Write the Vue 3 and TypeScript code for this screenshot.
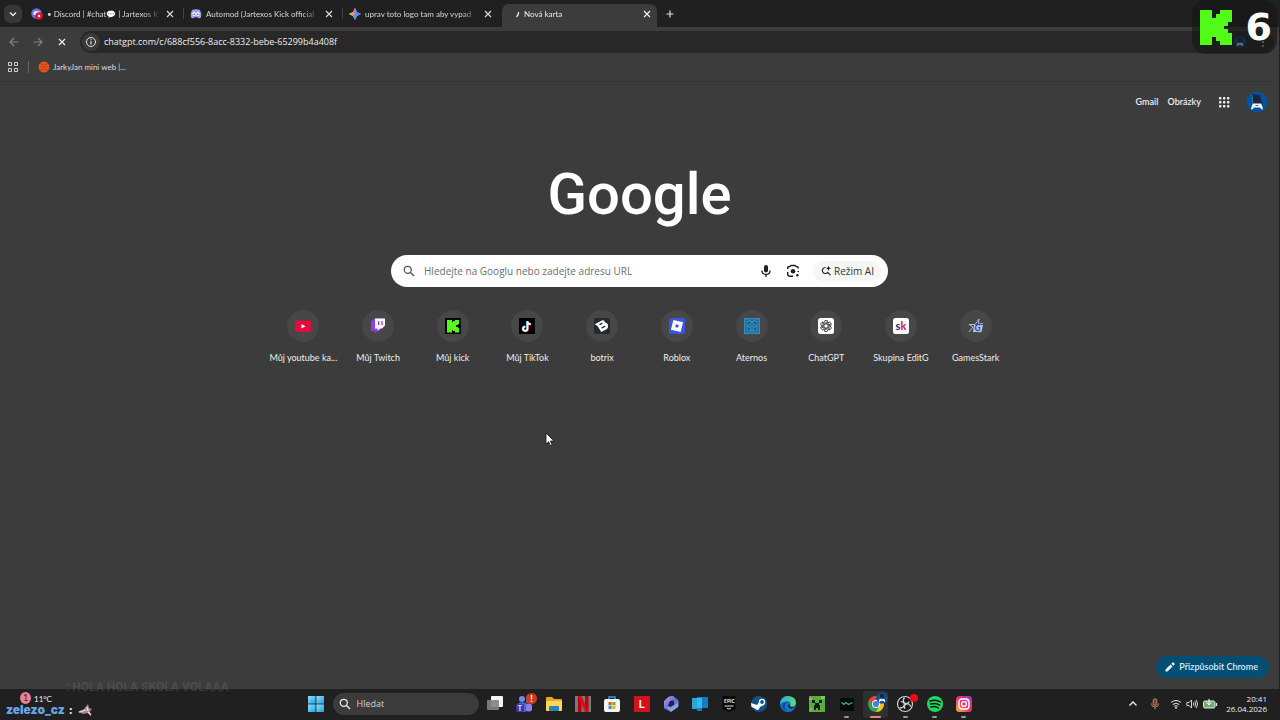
<script setup lang="ts">
import { ref } from 'vue'

interface Tab { icon: string; title: string; active?: boolean }
interface Shortcut { icon: string; label: string; mark?: string[] }
interface TaskApp { icon: string; label: string; mark?: string; state?: 'running' | 'focused' }

const tabs: Tab[] = [
  { icon: 'discord-live', title: '• Discord | #chat💬 | Jartexos K' },
  { icon: 'discord', title: 'Automod (Jartexos Kick official' },
  { icon: 'gemini', title: 'uprav toto logo tam aby vypad' },
  { icon: 'spinner', title: 'Nová karta', active: true },
]

const shortcuts: Shortcut[] = [
  { icon: 'youtube', label: 'Můj youtube ka...' },
  { icon: 'twitch', label: 'Můj Twitch' },
  { icon: 'kick-tile', label: 'Můj kick' },
  { icon: 'tiktok', label: 'Můj TikTok' },
  { icon: 'botrix', label: 'botrix' },
  { icon: 'roblox', label: 'Roblox' },
  { icon: 'aternos', label: 'Aternos' },
  { icon: 'chatgpt', label: 'ChatGPT' },
  { icon: 'skupina', label: 'Skupina EditG', mark: ['s', 'k'] },
  { icon: 'gamesstark', label: 'GamesStark', mark: ['G'] },
]

const apps: TaskApp[] = [
  { icon: 'taskview', label: 'Task View' },
  { icon: 'teams', label: 'Teams', mark: 'T' },
  { icon: 'folder', label: 'Explorer' },
  { icon: 'netflix', label: 'Netflix' },
  { icon: 'store', label: 'Store' },
  { icon: 'lapp', label: 'L', mark: 'L' },
  { icon: 'copilot', label: 'Microsoft 365' },
  { icon: 'panel', label: 'Panel' },
  { icon: 'epic', label: 'Epic Games', mark: 'EPIC' },
  { icon: 'steam', label: 'Steam' },
  { icon: 'edge', label: 'Edge' },
  { icon: 'minecraft', label: 'Minecraft' },
  { icon: 'wave', label: 'Wave', state: 'running' },
  { icon: 'chrome', label: 'Chrome', state: 'focused' },
  { icon: 'obs', label: 'OBS', state: 'running' },
  { icon: 'spotify', label: 'Spotify', state: 'running' },
  { icon: 'instagram', label: 'Instagram', state: 'running' },
]

const url = ref('chatgpt.com/c/688cf556-8acc-8332-bebe-65299b4a408f')
const query = ref('')
const taskQuery = ref('')
</script>

<template>
  <div class="screen">
    <svg class="defs" aria-hidden="true">
      <defs>
        <linearGradient id="gem" x1="0" y1="0.3" x2="1" y2="0.5">
          <stop offset="0.1" stop-color="#f2c24b" /><stop offset="0.45" stop-color="#d77ba8" /><stop offset="0.65" stop-color="#4f94f5" />
        </linearGradient>
        <linearGradient id="win" x1="0" y1="0" x2="1" y2="1">
          <stop offset="0" stop-color="#8fe3fb" /><stop offset="1" stop-color="#1a9fe8" />
        </linearGradient>
        <linearGradient id="insta" x1="0" y1="1" x2="1" y2="0">
          <stop offset="0" stop-color="#fdc03a" /><stop offset="0.45" stop-color="#ee3564" /><stop offset="1" stop-color="#9b30c8" />
        </linearGradient>
        <linearGradient id="edgeg" x1="0" y1="0" x2="1" y2="0.4">
          <stop offset="0" stop-color="#2aa9e4" /><stop offset="1" stop-color="#5cd878" />
        </linearGradient>
        <linearGradient id="cop" x1="0" y1="0" x2="1" y2="1">
          <stop offset="0" stop-color="#c79af5" /><stop offset="0.5" stop-color="#5d6edb" /><stop offset="1" stop-color="#67b9ef" />
        </linearGradient>
      </defs>
      <symbol id="i-close" viewBox="0 0 10 10"><path d="M2 2l6 6M8 2l-6 6" stroke="currentColor" stroke-width="1.2" /></symbol>
      <symbol id="i-discord" viewBox="0 0 12 12">
        <path d="M2 2Q6 .6 10 2Q12 5.500 11 9.500Q9.500 10.800 8 10L7.500 9.200H4.500L4 10Q2.500 10.800 1 9.500Q0 5.500 2 2z" fill="#9aa0f0" />
        <ellipse cx="4.100" cy="6" rx="1.700" ry="1.900" fill="#fff" /><ellipse cx="7.900" cy="6" rx="1.700" ry="1.900" fill="#fff" />
        <circle cx="4.200" cy="6.200" r=".8" fill="#3a4090" /><circle cx="7.800" cy="6.200" r=".8" fill="#3a4090" />
      </symbol>
      <symbol id="i-discord-live" viewBox="0 0 12 12">
        <circle cx="5.500" cy="5.500" r="5.300" fill="#6570e8" /><path d="M2.500 4Q5.500 2 9 4v3H2.500z" fill="#e8eaff" />
        <circle cx="8" cy="8" r="3.700" fill="#e01432" /><circle cx="8" cy="8" r="1.200" fill="#fff" />
      </symbol>
      <symbol id="i-gemini" viewBox="0 0 12 12">
        <path d="M6 .5Q6.800 5.200 11.500 6Q6.800 6.800 6 11.500Q5.200 6.800 .5 6Q5.200 5.200 6 .5z" fill="url(#gem)" stroke="url(#gem)" stroke-width="1" />
        <path d="M4 7.500L6 6.500 6 11z" fill="#46b781" opacity=".8" />
      </symbol>
      <symbol id="i-spinner" viewBox="0 0 12 12"><path d="M10.600 4Q10.800 7 8.500 9" fill="none" stroke="#e7ecf3" stroke-width="1.300" /></symbol>
      <symbol id="i-kick" viewBox="0 0 8 9" preserveAspectRatio="none">
        <g fill="#53fc18" shape-rendering="crispEdges">
          <rect width="3" height="9" /><rect x="3" y="2" width="3" height="5" /><rect x="4" y="1" width="3" height="3" />
          <rect x="5" width="3" height="3" /><rect x="4" y="5" width="3" height="3" /><rect x="5" y="6" width="3" height="3" />
        </g>
      </symbol>
      <symbol id="i-avatar" viewBox="0 0 22 22">
        <circle cx="11" cy="11" r="10.500" fill="#07519f" /><path d="M6 3l8 1 2 9-10 4z" fill="#1a2639" /><path d="M6 4l1 13" stroke="#2e78ba" />
        <path d="M7 12.500h8q1.700 2.500 2 6-1.800.500-3-2H8Q6.800 19 5 18.500 5.300 15 7 12.500z" fill="#fff" />
        <path d="M9.500 14.500h3" stroke="#567" />
      </symbol>

      <symbol id="i-youtube" viewBox="0 0 16 16"><rect y="2.500" width="16" height="11.500" rx="2.500" fill="#e8093e" /><path d="M6.500 6v4.500l4-2.250z" fill="#fff" /></symbol>
      <symbol id="i-twitch" viewBox="0 0 16 16">
        <path d="M1 3.500L4.500 .5H14V8L9 13H7.500L5 15.500V13H1z" fill="#8c3df0" /><path d="M5 .5h10V7.500L12 10.500H10L7.500 12.800V10.500H5z" fill="#fff" />
        <path d="M8.700 3.300v3.700M12 3.300v3.700" stroke="#7c34df" stroke-width="1.300" />
      </symbol>
      <symbol id="i-kick-tile" viewBox="0 0 16 16"><rect width="16" height="16" fill="#070b06" /><use href="#i-kick" x="2" y="1.500" width="12" height="13" /></symbol>
      <symbol id="i-tiktok" viewBox="0 0 16 16">
        <rect width="16" height="16" fill="#000" />
        <g fill="none" stroke-width="1.700"><path d="M8 3v7.500a2.200 2.200 0 1 1-2.200-2.200M8 3.500q.8 2.300 3.300 2.500" stroke="#25e2df" /><path d="M9 3.600v7.500a2.200 2.200 0 1 1-2.200-2.200M9 4.100q.8 2.300 3.300 2.500" stroke="#ef3157" /><path d="M8.500 3.200v7.500a2.200 2.200 0 1 1-2.200-2.200M8.500 3.700q.8 2.300 3.300 2.500" stroke="#fff" /></g>
      </symbol>
      <symbol id="i-botrix" viewBox="0 0 16 16">
        <rect width="16" height="16" rx="2" fill="#24292f" />
        <g transform="rotate(-28 8 8)"><path d="M2.500 3h8q2.500.500 2 3.300 1.800 1 1.300 3.500T11 13H4.500L4 6z" fill="#fff" /><rect x="6.300" y="5" width="3.600" height="1.300" rx=".6" fill="#24292f" /><rect x="6.500" y="9" width="4.300" height="1.300" rx=".6" fill="#24292f" /></g>
      </symbol>
      <symbol id="i-roblox" viewBox="0 0 16 16"><rect width="16" height="16" rx="2.500" fill="#3b55e0" /><g transform="rotate(14 8 8)"><rect x="3" y="3" width="10" height="10" fill="#fff" /><rect x="6.500" y="6.500" width="3" height="3" fill="#3b55e0" /></g></symbol>
      <symbol id="i-aternos" viewBox="0 0 16 16">
        <rect width="16" height="16" fill="#2c8bc9" /><rect x="2" y="2" width="12" height="12" fill="none" stroke="#27506d" stroke-width=".8" />
        <path d="M4.500 6.500v-2h2M9.500 4.500h2v2M11.500 9.500v2h-2M6.500 11.500h-2v-2" fill="none" stroke="#23475f" stroke-width="1.200" />
        <rect x="6" y="6" width="4" height="4" fill="none" stroke="#23475f" stroke-width="1" stroke-dasharray="2 2" stroke-dashoffset="-1" />
      </symbol>
      <symbol id="i-chatgpt" viewBox="0 0 16 16">
        <rect width="16" height="16" rx="2.500" fill="#fff" />
        <g fill="none" stroke="#222" stroke-width=".8">
          <path id="petal" d="M6 8.900V4.500Q6 2.400 8 2.400Q9.300 2.400 10 3.400L6.500 5.400" /><use href="#petal" transform="rotate(60 8 8)" /><use href="#petal" transform="rotate(120 8 8)" />
          <use href="#petal" transform="rotate(180 8 8)" /><use href="#petal" transform="rotate(240 8 8)" /><use href="#petal" transform="rotate(300 8 8)" />
        </g>
      </symbol>
      <symbol id="i-skupina" viewBox="0 0 16 16"><rect width="16" height="16" rx="2.500" fill="#fff" /></symbol>
      <symbol id="i-gamesstark" viewBox="0 0 16 16">
        <path d="M1 14L5 9 1 6.500h6L11 1l-.5 5L15 5.500M12 14L8 12z" fill="none" stroke="#b9c8e4" stroke-width=".9" /><path d="M6 7h9l-1.500 7H5z" fill="#b9c8e4" />
      </symbol>

      <symbol id="i-taskview" viewBox="0 0 18 18"><rect x="5" y="1" width="12" height="11" rx="1" fill="#f5f5f5" /><rect x="1" y="5" width="12" height="10" rx="1" fill="#828282" opacity=".9" /></symbol>
      <symbol id="i-teams" viewBox="0 0 18 18">
        <circle cx="7" cy="4" r="3" fill="#6d8bf0" /><circle cx="13.500" cy="6" r="2.300" fill="#a58cf2" /><rect x="3" y="7.500" width="9" height="9.500" rx="2.500" fill="#5065d9" /><rect x="11" y="8.500" width="6" height="8" rx="2.500" fill="#927bec" /><rect x="1" y="9" width="8" height="8" rx="1.500" fill="#3f36ae" />
      </symbol>
      <symbol id="i-folder" viewBox="0 0 18 18"><path d="M1 3q0-1 1-1h5l2 2h7q1 0 1 1v10q0 1-1 1H2q-1 0-1-1z" fill="#e8a922" /><path d="M1 6h16v9q0 1-1 1H2q-1 0-1-1z" fill="#ffd55c" /><path d="M4 16v-4q0-1 1-1h8q1 0 1 1v4z" fill="#2685b9" /></symbol>
      <symbol id="i-netflix" viewBox="0 0 18 18"><rect x="1" y="1" width="16" height="16" fill="#77797a" /><rect x="4" y="1" width="3.500" height="16" fill="#b20710" /><rect x="11" y="1" width="3.500" height="16" fill="#b20710" /><path d="M4 1h3.500l7 16H11z" fill="#e50914" /></symbol>
      <symbol id="i-store" viewBox="0 0 18 18"><path d="M6 5V2h6v3" fill="none" stroke="#2b9fe4" stroke-width="1.500" /><rect x="1" y="4" width="16" height="13" rx="2" fill="#f3f6f8" /><rect x="5.500" y="7" width="3.200" height="3.200" fill="#f05024" /><rect x="9.300" y="7" width="3.200" height="3.200" fill="#76b813" /><rect x="5.500" y="10.800" width="3.200" height="3.200" fill="#0aa3ee" /><rect x="9.300" y="10.800" width="3.200" height="3.200" fill="#fcb900" /></symbol>
      <symbol id="i-lapp" viewBox="0 0 18 18"><rect x="1" y="1" width="16" height="16" fill="#d4111d" /></symbol>
      <symbol id="i-copilot" viewBox="0 0 18 18"><path d="M7 2l4-.500 5 4v6L9 16.500 2.500 13V6z" fill="url(#cop)" stroke="url(#cop)" stroke-width="1" stroke-linejoin="round" /><path d="M8 6l3.500-.500 1 4L8.500 12 6 10.500z" fill="#202534" /><path d="M9 16.500l7-4.500V8l-3.500 2-4 2.500L4 12z" fill="#8fa5ea" opacity=".85" /></symbol>
      <symbol id="i-panel" viewBox="0 0 18 18"><path d="M1 3h10v11H1z" fill="#29a7dd" /><path d="M6 2h11v11h-6v3H6z" fill="#147dbd" /><path d="M6 3h5v10H6z" fill="#34b9ea" /></symbol>
      <symbol id="i-epic" viewBox="0 0 18 18"><path d="M2.500 1h13v13L9 17l-6.500-3z" fill="#080808" /><path d="M4.500 11h9M7 13.500q2 1 4 0" stroke="#ddd" stroke-width="1" fill="none" /></symbol>
      <symbol id="i-steam" viewBox="0 0 18 18"><circle cx="9" cy="9" r="8" fill="#155186" /><path d="M1 8l6 2 3-4h4v4l-4 2-1 2q-2 2-4-.5L1.500 12z" fill="#fff" /><circle cx="12" cy="7" r="3.200" fill="#fff" /><circle cx="12" cy="7" r="1.900" fill="#155186" /></symbol>
      <symbol id="i-edge" viewBox="0 0 18 18"><circle cx="9" cy="9" r="8" fill="#1378cd" /><path d="M1 9Q2 1 9 1q8 .5 8 7-1 4-6 3 2-5-3-5-5 .5-7 3z" fill="url(#edgeg)" /><path d="M8 7q-5 6 1 9-6-1-6-5 1-4 5-4z" fill="#0d4c9e" /><path d="M11 9q-1 4 5 3-3 3-6 1-3-3 1-4z" fill="#202b2b" /></symbol>
      <symbol id="i-minecraft" viewBox="0 0 18 18" shape-rendering="crispEdges"><rect x="1" y="1" width="16" height="16" fill="#58ad3e" /><path d="M1 3h3v2H1zM13 1h4v3h-4zM2 13h2v3H2z" fill="#7bc858" /><path d="M4 5h3v3H4zM11 5h3v3h-3zM7 8h4v2h1v5h-2v-2H8v2H6v-5h1z" fill="#0b1e0a" /></symbol>
      <symbol id="i-wave" viewBox="0 0 18 18"><rect x="2" y="3" width="14" height="13" rx="1" fill="#080b0d" /><path d="M3.500 7.500l2.500 2 2-2 2.500 2 4-2" stroke="#3cb095" stroke-width="1.300" fill="none" /></symbol>
      <symbol id="i-chrome" viewBox="0 0 18 18"><circle cx="9" cy="9" r="8" fill="#2da44e" /><path d="M2.070 5A8 8 0 0 1 15.930 5H9L5.540 11z" fill="#e94235" /><path d="M9 5h6.930A8 8 0 0 1 9 17l3.460-6z" fill="#fbc116" /><circle cx="9" cy="9" r="4" fill="#fff" /><circle cx="9" cy="9" r="3.100" fill="#3c80ee" /></symbol>
      <symbol id="i-obs" viewBox="0 0 18 18"><circle cx="9" cy="9" r="7.500" fill="#181818" stroke="#d4d4d4" stroke-width="1.200" /><g fill="none" stroke="#d0d0d0" stroke-width="1.300"><path id="blade" d="M8.500 2.500q-3 4 1 6 3 .5 3.500-2" /><use href="#blade" transform="rotate(120 9 9)" /><use href="#blade" transform="rotate(240 9 9)" /></g></symbol>
      <symbol id="i-spotify" viewBox="0 0 18 18"><circle cx="9" cy="9" r="8" fill="#20d760" /><path d="M4 6q6-2 10.500 1M4.500 9q5-1.500 9 1M5 12q4-1.500 7.500 1" stroke="#111" stroke-width="1.500" stroke-linecap="round" fill="none" /></symbol>
      <symbol id="i-instagram" viewBox="0 0 18 18"><rect x="1" y="1" width="16" height="16" rx="3.500" fill="url(#insta)" /><rect x="4" y="4" width="10" height="10" rx="3" fill="none" stroke="#fff" stroke-width="1.400" /><circle cx="9" cy="9" r="2.400" fill="none" stroke="#fff" stroke-width="1.400" /><circle cx="12" cy="6" r=".7" fill="#fff" /></symbol>
      <symbol id="i-search" viewBox="0 0 12 12"><circle cx="4.800" cy="4.800" r="3.500" fill="none" stroke="currentColor" stroke-width="1.300" /><path d="M7.300 7.300l3.700 3.700" stroke="currentColor" stroke-width="1.400" /></symbol>
    </svg>

    <header class="browser">
      <nav class="tabstrip" aria-label="Tabs">
        <button class="tab-menu" aria-label="Search tabs"><svg viewBox="0 0 18 18"><path d="M6 7.500l3 3 3-3" fill="none" stroke="#e6e6e6" stroke-width="1.500" /></svg></button>
        <div v-for="tab in tabs" :key="tab.icon" class="tab" :class="{ active: tab.active }">
          <svg class="favicon"><use :href="`#i-${tab.icon}`" /></svg>
          <a href="#" class="tab-title">{{ tab.title }}</a>
          <button class="tab-close" aria-label="Close tab"><svg><use href="#i-close" /></svg></button>
        </div>
        <button class="new-tab" aria-label="New tab"><svg viewBox="0 0 10 10"><path d="M5 1.500v7M1.500 5h7" stroke="#dedede" stroke-width="1.200" /></svg></button>
      </nav>
      <div class="toolbar">
        <button class="nav dim" aria-label="Back"><svg viewBox="0 0 12 12"><path d="M10.500 6H2M6 2L2 6l4 4" /></svg></button>
        <button class="nav dim" aria-label="Forward"><svg viewBox="0 0 12 12"><path d="M1.500 6H10M6 2l4 4-4 4" /></svg></button>
        <button class="nav" aria-label="Stop"><svg viewBox="0 0 12 12"><path d="M3 3l6 6M9 3L3 9" /></svg></button>
        <label class="address">
          <span class="info"><svg viewBox="0 0 12 12"><circle cx="6" cy="6" r="4.500" fill="none" stroke="#e5e5e5" /><path d="M6 5.300V8.500M6 3.300v1" stroke="#e5e5e5" stroke-width="1.200" /></svg></span>
          <input v-model="url" type="text" aria-label="Address">
          <svg class="mini-avatar"><use href="#i-avatar" /></svg>
          <button class="menu" aria-label="Menu"><svg viewBox="0 0 12 12" fill="#ddd"><circle cx="6" cy="2" r="1" /><circle cx="6" cy="6" r="1" /><circle cx="6" cy="10" r="1" /></svg></button>
        </label>
      </div>
      <div class="bookmarks">
        <button class="apps-button" aria-label="Bookmarks"><svg viewBox="0 0 12 12"><path d="M1.500 1.500h3v3h-3zM7.500 1.500h3v3h-3zM1.500 7.500h3v3h-3zM7.500 7.500h3v3h-3z" fill="none" stroke="#d0d0d0" /></svg></button>
        <i class="divider"></i>
        <a href="#" class="bookmark"><svg viewBox="0 0 12 12"><circle cx="6" cy="6" r="5.500" fill="#e6561f" /><path d="M.5 6h11M2 2.500q4 3 8 0M2 9.500q4-3 8 0" stroke="#a93c14" stroke-width=".7" fill="none" /></svg>JarkyJan mini web |...</a>
      </div>
    </header>

    <main>
      <div class="account">
        <a href="#">Gmail</a><a href="#">Obrázky</a>
        <button aria-label="Google apps" class="grid-button"><svg viewBox="0 0 12 12" fill="#f2f2f2"><g v-for="y in 3" :key="y"><rect v-for="x in 3" :key="x" :x="x * 4 - 3" :y="y * 4 - 3" width="2.400" height="2.400" rx=".7" /></g></svg></button>
        <button aria-label="Account" class="account-button"><svg><use href="#i-avatar" /></svg></button>
      </div>
      <h1 class="wordmark">Google</h1>
      <form class="search" @submit.prevent>
        <svg class="magnifier"><use href="#i-search" /></svg>
        <input v-model="query" type="text" aria-label="Search Google" placeholder="Hledejte na Googlu nebo zadejte adresu URL">
        <button type="button" class="tool" aria-label="Voice"><svg viewBox="0 0 14 14"><rect x="5" y="1" width="4" height="7.500" rx="2" fill="#1f1f1f" /><path d="M3 6.500q0 4 4 4t4-4M7 10.500V13" stroke="#1f1f1f" stroke-width="1.300" fill="none" /></svg></button>
        <button type="button" class="tool" aria-label="Lens"><svg viewBox="0 0 14 14"><path d="M1.700 5V4q0-1.500 2-1.500L5 1.500h4l1.300 1q2 0 2 2M1.700 8v2q0 2.300 2.300 2.300h3" fill="none" stroke="#1f1f1f" stroke-width="1.400" /><circle cx="7" cy="7.200" r="2.300" fill="#1f1f1f" /><circle cx="11.300" cy="11.200" r="1.200" fill="#1f1f1f" /><circle cx="12.300" cy="7.500" r=".8" fill="#1f1f1f" /></svg></button>
        <button type="button" class="ai"><svg viewBox="0 0 12 12"><path d="M5.500 2.500A3 3 0 1 0 7.700 7.300L10.500 10.200" fill="none" stroke="#222" stroke-width="1.200" /><path d="M8.500 .8q.3 2.200 2.500 2.500Q8.800 3.600 8.500 6 8.200 3.600 6 3.300 8.200 3 8.500 .8z" fill="#222" /></svg>Režim AI</button>
      </form>
      <nav class="shortcuts" aria-label="Shortcuts">
        <a v-for="item in shortcuts" :key="item.icon" href="#" class="shortcut">
          <span class="disc"><svg><use :href="`#i-${item.icon}`" /></svg>
            <span v-if="item.mark" class="mark" :class="item.icon"><i v-for="letter in item.mark" :key="letter">{{ letter }}</i></span>
          </span>
          <span>{{ item.label }}</span>
        </a>
      </nav>
      <button class="customize"><svg viewBox="0 0 12 12"><path d="M1.500 8.500V10.500H3.500L8.500 5.500l-2-2zM7.300 2.700l2 2L10.600 3.400Q11 3 10.500 2.500L9.500 1.500Q9 1 8.600 1.400z" fill="#e5f6ff" /></svg>Přizpůsobit Chrome</button>
    </main>

    <footer class="taskbar">
      <div class="weather">11°C</div>
      <div class="task-center">
        <button class="start" aria-label="Start"><svg viewBox="0 0 16 16" fill="url(#win)"><rect width="7.600" height="7.600" /><rect x="8.400" width="7.600" height="7.600" /><rect y="8.400" width="7.600" height="7.600" /><rect x="8.400" y="8.400" width="7.600" height="7.600" /></svg></button>
        <label class="task-search"><svg><use href="#i-search" /></svg><input v-model="taskQuery" type="text" aria-label="Hledat" placeholder="Hledat"></label>
        <div class="task-apps">
          <button v-for="app in apps" :key="app.icon" class="task-app" :class="[app.icon, app.state]" :aria-label="app.label">
            <svg><use :href="`#i-${app.icon}`" /></svg>
            <b v-if="app.mark" class="app-mark">{{ app.mark }}</b>
            <span v-if="app.icon === 'teams'" class="alert">!</span>
            <span v-if="app.icon === 'obs'" class="record"></span>
            <svg v-if="app.icon === 'chrome'" class="profile"><use href="#i-avatar" /></svg>
          </button>
        </div>
      </div>
      <div class="tray">
        <svg class="chevron" viewBox="0 0 12 12"><path d="M2.500 7.500L6 4l3.500 3.500" stroke="#f0f0f0" stroke-width="1.300" fill="none" /></svg>
        <svg class="mic" viewBox="0 0 12 12"><rect x="4.200" y=".8" width="3.600" height="6.500" rx="1.800" stroke="#c87f61" fill="#704737" /><path d="M2.500 5.500q0 3.500 3.500 3.500t3.500-3.500M6 9v2.500" stroke="#c87f61" fill="none" /></svg>
        <svg viewBox="0 0 12 12"><path d="M1 4.500q5-4 10 0M2.700 6.500q3.300-2.600 6.600 0M4.200 8.300q1.800-1.300 3.600 0" stroke="#e5e5e5" fill="none" /><circle cx="6" cy="9.800" r=".9" fill="#fff" /></svg>
        <svg viewBox="0 0 12 12"><path d="M.8 4.500H3L5.500 2v8L3 7.500H.8zM7.300 4.500q1 1.500 0 3M8.800 3.200q2 2.800 0 5.600M10.300 2q2.600 4 0 8" stroke="#e5e5e5" stroke-width=".9" fill="none" /></svg>
        <svg class="battery" viewBox="0 0 16 12"><rect x="1.500" y="3" width="11.500" height="7" rx="1.500" fill="#70ad77" stroke="#d9efda" /><path d="M14.500 5v3" stroke="#d9efda" stroke-width="1.300" /><path d="M7 1v6M4.800 4.500L7 7l2.200-2.500" stroke="#fff" fill="none" /></svg>
        <time>20:41<br>26.04.2026</time>
      </div>
    </footer>

    <aside class="viewer-badge"><svg><use href="#i-kick" /></svg><strong>6</strong></aside>
    <p class="chat-faded">: HOLA HOLA SKOLA VOLAAA</p>
    <div class="notice">1</div>
    <p class="chat"><b>zelezo_cz</b> : <svg viewBox="0 0 16 14"><path d="M1 9l6-3 4-5 1 4 3 1-2 2 1 5-3-3-5 1z" fill="#a48991" /><path d="M2 9l7-2M10 4l1 4M11 9l3 3" stroke="#efdfe3" stroke-width="1.300" /></svg></p>
    <svg class="cursor" viewBox="0 0 10 15"><path d="M1 1v11l2.600-2.300 1.700 3.800 1.800-.8-1.700-3.700H9z" fill="#fff" stroke="#111" stroke-width=".8" /></svg>
  </div>
</template>

<style>
html, body { margin: 0; background: #3c3c3c; }
</style>

<style scoped>
* { box-sizing: border-box; }
.screen { position: relative; display: flex; flex-direction: column; min-height: 100vh; overflow: hidden; background: #3c3c3c; border-right: 1px solid #202020; color: #eee; font: 9px/12px Lato, "Noto Sans", sans-serif; }
.defs { position: absolute; width: 0; height: 0; }
button { border: 0; padding: 0; background: none; color: inherit; font: inherit; display: flex; align-items: center; justify-content: center; flex: none; }
input { border: 0; outline: 0; padding: 0; background: none; color: inherit; font: inherit; line-height: 18px; min-width: 0; flex: 1; }
a { color: inherit; text-decoration: none; }
svg { display: block; flex: none; width: 12px; height: 12px; }

.browser { border-bottom: 1px solid #353535; }
.tabstrip { display: flex; align-items: center; height: 27px; padding-left: 4px; background: #1f201f; }
.tab-menu { width: 18px; height: 18px; margin-right: 3px; border-radius: 6px; background: #373737; }
.tab-menu svg { width: 18px; height: 18px; }
.tab { position: relative; display: flex; align-items: center; width: 159px; height: 23px; margin-top: 4px; padding: 0 9px 4px 6px; color: #d8d8d8; font-size: 8px; }
.tab:not(.active)::after { content: ""; position: absolute; right: 0; top: 4px; width: 1px; height: 11px; background: #444; }
.tab:nth-child(4)::after { display: none; }
.tab.active { width: 155px; padding-right: 5px; border-radius: 7px 7px 0 0; background: #3c3c3c; color: #eee; }
.tab-title { flex: 1; min-width: 0; margin: 0 5px 0 4px; overflow: hidden; white-space: nowrap; mask-image: linear-gradient(to right, #000 86%, transparent); }
.tab-close svg, .new-tab svg { width: 10px; height: 10px; }
.new-tab { margin-left: 8px; }
.toolbar { display: flex; align-items: center; height: 29px; padding: 1px 5px 0 8px; }
.nav { width: 12px; margin-right: 12px; color: #eee; }
.nav svg { fill: none; stroke: currentColor; stroke-width: 1.2; }
.dim { color: #818181; }
.address { display: flex; align-items: center; flex: 1; height: 22px; border-radius: 11px; background: #282828; font-family: "Open Sans", sans-serif; }
.info { display: grid; place-items: center; width: 18px; height: 18px; margin: 0 4px 0 2px; border-radius: 9px; background: #3a3a3a; }
.mini-avatar { margin-right: 11px; }
.menu { margin-right: 5px; }
.bookmarks { display: flex; align-items: center; height: 25px; padding: 0 7px 4px; font-size: 8px; }
.divider { width: 1px; height: 12px; margin: 0 9px; background: #666; }
.bookmark { display: flex; align-items: center; gap: 3px; color: #ddd; }

main { position: relative; flex: 1; display: flex; flex-direction: column; align-items: center; }
.account { display: flex; align-items: center; align-self: stretch; justify-content: flex-end; height: 40px; padding-right: 11px; font-weight: 600; }
.account a { margin-left: 9px; }
.grid-button { margin: 0 16px 0 17px; }
.account-button svg { width: 22px; height: 22px; }
.wordmark { margin: 36px 0 0; color: #fff; font: 500 58px/72px Roboto, sans-serif; }
.search { display: flex; align-items: center; width: 497px; height: 32px; margin-top: 25px; padding: 0 7px 0 12px; border-radius: 16px; background: #fff; color: #333; font-family: "Open Sans", sans-serif; font-size: 10px; }
.magnifier { margin-right: 9px; color: #555; }
.search input::placeholder { color: #6d6d6d; opacity: 1; }
.tool { width: 14px; margin-right: 13px; }
.tool svg { width: 14px; height: 14px; }
.ai { gap: 2px; height: 20px; padding: 0 7px; border-radius: 10px; background: #f5f6f6; }
.shortcuts { display: grid; grid-template-columns: repeat(10, 1fr); width: 747px; margin-top: 23px; }
.shortcut { display: flex; flex-direction: column; align-items: center; gap: 10px; white-space: nowrap; }
.disc { position: relative; display: grid; place-items: center; width: 32px; height: 32px; border-radius: 50%; background: #464746; }
.disc svg { width: 16px; height: 16px; }
.mark { position: absolute; inset: 8px; display: flex; justify-content: center; font-size: 11px; font-weight: 700; line-height: 15px; }
.mark i { font-style: normal; color: #20267f; }
.mark i + i { color: #d32032; }
.mark.gamesstark { padding: 3px 0 0 4px; font-size: 9px; line-height: 14px; }
.mark.gamesstark i { color: #1c45b4; font-style: italic; }
.customize { gap: 3px; align-self: flex-end; height: 22px; margin: auto 10px 11px; padding: 0 11px 0 8px; border-radius: 11px; background: #044e73; color: #d2efff; font-weight: 600; }

.taskbar { display: grid; grid-template-columns: 1fr auto 1fr; align-items: center; height: 31px; padding-bottom: 1px; background: #202020; }
.weather { padding: 0 0 10px 34px; font-size: 8px; }
.task-center { display: flex; align-items: center; }
.start { width: 30px; margin-right: 2px; }
.start svg { width: 16px; height: 16px; }
.task-search { display: flex; align-items: center; gap: 6px; width: 146px; height: 22px; margin-right: 2px; padding: 0 6px; border-radius: 11px; background: #3b3b3b; font-family: "Open Sans", sans-serif; }
.task-search input::placeholder { color: #d4d4d4; opacity: 1; }
.task-apps { display: grid; grid-template-columns: repeat(17, 1fr); justify-items: center; width: 498px; }
.task-app { position: relative; width: 25px; height: 27px; border-radius: 3px; }
.task-app svg { width: 18px; height: 18px; }
.running::after, .focused::after { content: ""; position: absolute; bottom: 0; left: 10px; width: 5px; height: 2px; border-radius: 1px; background: #999; }
.focused { background: #303030; }
.focused::after { left: 7px; width: 11px; background: #ef8573; }
.app-mark { position: absolute; inset: 0; text-align: center; }
.lapp .app-mark { font-size: 12px; line-height: 26px; }
.epic .app-mark { font-size: 5px; line-height: 21px; }
.teams .app-mark { right: 9px; font-size: 7px; line-height: 35px; }
.alert { position: absolute; right: 0; top: 2px; width: 11px; height: 11px; border-radius: 50%; background: #d13b1c; color: #fff; font-weight: 700; line-height: 11px; }
.record { position: absolute; right: 0; top: 3px; width: 8px; height: 8px; border-radius: 50%; background: #f00b16; }
.task-app .profile { position: absolute; right: 0; top: 1px; width: 12px; height: 12px; }
.tray { display: flex; align-items: center; justify-content: flex-end; gap: 4px; padding-right: 12px; text-align: right; }
.chevron { margin-right: 6px; }
.mic { margin-right: 5px; }
.tray .battery { width: 16px; }
time { width: 45px; font-family: "Open Sans", sans-serif; font-size: 8px; line-height: 10px; white-space: nowrap; }

.viewer-badge { position: absolute; top: 0; right: 2px; display: flex; align-items: center; gap: 14px; height: 54px; padding: 0 5px 0 8px; border-radius: 14px; background: rgba(22, 22, 22, .6); color: #fff; }
.viewer-badge svg { width: 32px; height: 35px; }
.viewer-badge strong { font: 700 38px/56px "DejaVu Sans", sans-serif; }
.chat-faded { position: absolute; left: 66px; bottom: 26px; margin: 0; color: rgba(120, 120, 120, .3); font: 700 12px/14px Roboto, sans-serif; }
.notice { position: absolute; left: 20px; bottom: 16px; width: 11px; height: 12px; border-radius: 50%; background: #ee7e92; color: #3c2026; text-align: center; }
.chat { position: absolute; left: 6px; bottom: 2px; display: flex; align-items: center; gap: 4px; margin: 0; font: 700 12px/16px Inter, sans-serif; }
.chat b { color: #69a5e5; }
.chat svg { width: 16px; height: 14px; }
.cursor { position: absolute; left: 545px; top: 432px; width: 10px; height: 15px; }
</style>
